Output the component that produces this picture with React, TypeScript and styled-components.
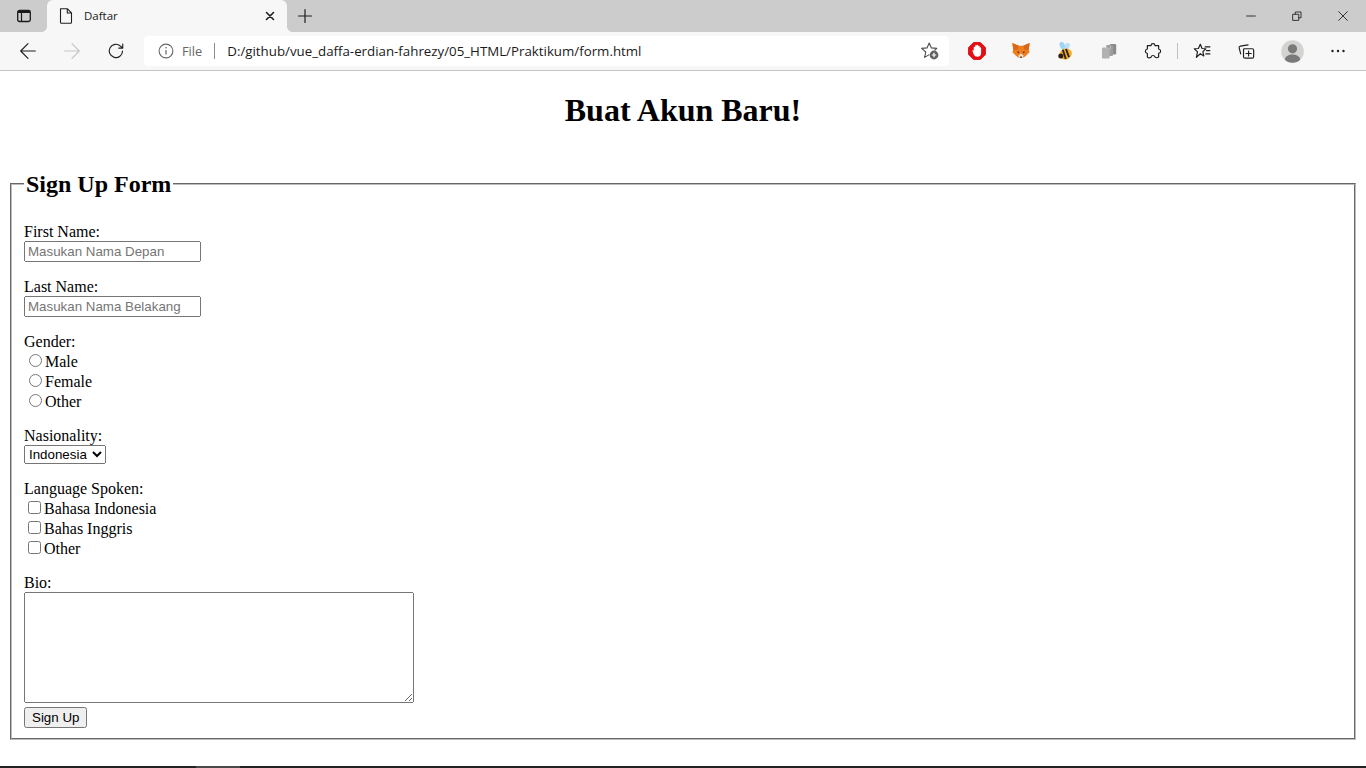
import React from 'react'
import styled, { createGlobalStyle } from 'styled-components';

const GlobalStyle = createGlobalStyle`
    html, body {
        margin: 0;
        padding: 0;
        height: 100%;
        overflow: hidden;
        background: #fff;
    }
`;

const Frame = styled.div`
    display: flex;
    flex-direction: column;
    width: 1366px;
    height: 768px;
    overflow: hidden;
`;

const TabStrip = styled.div`
    display: flex;
    align-items: stretch;
    flex: none;
    height: 32px;
    background: #cccccc;
`;

const SidebarButton = styled.div`
    display: flex;
    align-items: center;
    justify-content: center;
    width: 47px;
`;

const Tab = styled.div`
    position: relative;
    display: flex;
    align-items: center;
    width: 240px;
    background: #f7f7f7;
    border-radius: 6px 6px 0 0;
    padding: 0 9px 0 11px;
    box-sizing: border-box;

    &::before, &::after {
        content: "";
        position: absolute;
        bottom: 0;
        width: 5px;
        height: 5px;
    }
    &::before {
        left: -5px;
        background: radial-gradient(circle at 0 0, transparent 4.5px, #f7f7f7 5px);
    }
    &::after {
        right: -5px;
        background: radial-gradient(circle at 100% 0, transparent 4.5px, #f7f7f7 5px);
    }
`;

const TabTitle = styled.span`
    flex: 1;
    margin-left: 10px;
    padding-bottom: 2px;
    font-family: "Open Sans", "Noto Sans", sans-serif;
    font-size: 11.5px;
    color: #1a1a1a;
`;

const NewTab = styled.div`
    display: flex;
    align-items: center;
    justify-content: center;
    width: 36px;
`;

const Spacer = styled.div`
    flex: 1;
`;

const WindowButton = styled.div`
    display: flex;
    align-items: center;
    justify-content: center;
    width: 46px;
`;

const Toolbar = styled.div`
    display: flex;
    align-items: center;
    flex: none;
    height: 38px;
    padding: 0 6px;
    background: #f7f7f7;
    border-bottom: 1px solid #c4c4c4;
`;

const ToolButton = styled.div<{ $gap?: number }>`
    display: flex;
    align-items: center;
    justify-content: center;
    flex: none;
    width: 44px;
    height: 30px;
    margin-left: ${p => p.$gap || 0}px;
`;

const AddressBar = styled.div`
    display: flex;
    align-items: center;
    width: 805px;
    height: 30px;
    margin: 0 6px;
    padding: 0 9px 0 14px;
    box-sizing: border-box;
    background: #fff;
    border-radius: 4px;
    font-family: "Open Sans", "Noto Sans", sans-serif;
    font-size: 13.3px;
`;

const Scheme = styled.span`
    margin-left: 8px;
    font-size: 12.8px;
    color: #666;
`;

const AddressDivider = styled.span`
    width: 1px;
    height: 16px;
    margin: 0 12px 0 12px;
    background: #8c8c8c;
`;

const Url = styled.span`
    flex: 1;
    color: #1a1a1a;
`;

const ToolDivider = styled.div`
    flex: none;
    width: 1px;
    height: 16px;
    margin: 0 2px;
    background: #c0c0c0;
`;

const Page = styled.main`
    flex: 1;
    min-height: 0;
    padding: 0 8px;
    overflow: hidden;
    background: #fff;
    color: #000;
    font-family: "Liberation Serif", "Times New Roman", serif;
    font-size: 16px;
`;

const Title = styled.h1`
    margin: 21.44px 0 18px;
    font-size: 32px;
    font-weight: bold;
    text-align: center;
`;

const FormBox = styled.fieldset`
    margin: 40px 2px 0;
    padding: 0 12px 10px;
    border: 2px groove #bcbcbc;
`;

const BoxTitle = styled.legend`
    padding: 2px 2px 0;
    font-size: 24px;
    font-weight: bold;
`;

const Field = styled.div`
    margin-top: 16px;
    &:first-of-type {
        margin-top: 25px;
    }
`;

const FieldLabel = styled.label`
    display: block;
`;

const TextInput = styled.input`
    display: block;
    width: 177px;
    box-sizing: border-box;
    font-family: "Liberation Sans", Arial, sans-serif;
`;

const Choice = styled.label`
    display: block;
`;

const BioInput = styled.textarea`
    display: block;
    width: 384px;
    height: 105px;
    font-family: "Liberation Mono", monospace;
`;

const Submit = styled.button`
    display: block;
    margin-top: 4px;
    font-family: "Liberation Sans", Arial, sans-serif;
`;

const NationSelect = styled.select`
    display: block;
    width: 82px;
    font-family: "Liberation Sans", Arial, sans-serif;
`;

const TaskbarEdge = styled.div`
    display: flex;
    flex: none;
    height: 2px;
    background: #222;
`;

const TaskbarGap = styled.div`
    width: 196px;
`;

const TaskbarActive = styled.div`
    width: 44px;
    background: #4a4a4a;
`;

const Line = ({ d, w = 16, color = '#1f1f1f', sw = 1.2 }: { d: string, w?: number, color?: string, sw?: number }) => (
    <svg width={w} height={w} viewBox="0 0 16 16" fill="none" stroke={color} strokeWidth={sw} strokeLinecap="round" strokeLinejoin="round">
        <path d={d} />
    </svg>
);

const Opera = () => (
    <svg width="18" height="18" viewBox="0 0 18 18">
        <path d="M5.6.6 H12.4 L17.4 5.6 V12.4 L12.4 17.4 H5.6 L.6 12.4 V5.6Z" fill="#e40f16" stroke="#e40f16" strokeLinejoin="round" />
        <path d="M4.9 10.2 L4.3 8.6 Q4.9 7.8 5.7 8.5 V5.4 A.75.75 0 0 1 7.2 5.4 V3.8 A.75.75 0 0 1 8.7 3.8 V3.5 A.75.75 0 0 1 10.2 3.5 V4.4 A.75.75 0 0 1 11.7 4.4 V6 A.7.7 0 0 1 13.1 6 V10.8 Q13.1 14.8 9.4 14.8 Q6.6 14.8 5.8 12.6Z" fill="#fff" />
    </svg>
);

const Fox = () => (
    <svg width="18" height="18" viewBox="0 0 18 18">
        <path d="M.4 1 L6.8 3.8 H11.2 L17.6 1 L16.8 7.8 L17.6 10.2 L13.8 14 L10.8 16 H7.2 L4.2 14 L.4 10.2 L1.2 7.8Z" fill="#ee7f1f" />
        <path d="M.4 1 L6.8 3.8 L5.4 8 L1.2 7.8Z M17.6 1 L11.2 3.8 L12.6 8 L16.8 7.8Z" fill="#d9691a" />
        <path d="M6.4 13.6 L9 11.4 L11.6 13.6 L10.8 16 H7.2Z" fill="#f1dcc8" />
        <path d="M4.6 9.6 L7.2 9.8 L6.8 11.4Z M13.4 9.6 L10.8 9.8 L11.2 11.4Z" fill="#4a2e1c" />
        <rect x="8" y="14.6" width="2" height="1.2" fill="#3b2f29" />
    </svg>
);

const Bee = () => (
    <svg width="18" height="20" viewBox="0 0 18 20">
        <ellipse cx="6.4" cy="4.6" rx="2.6" ry="4" fill="#9fd4f5" transform="rotate(-22 6.4 4.6)" />
        <ellipse cx="11.2" cy="5" rx="2.4" ry="3.4" fill="#b9e0f8" transform="rotate(24 11.2 5)" />
        <ellipse cx="9.6" cy="13" rx="6.4" ry="5.4" fill="#f5ad26" transform="rotate(-25 9.6 13)" />
        <path d="M6.8 8.8 L9.8 18 M10 8 L13 16.2" stroke="#2a2018" strokeWidth="1.9" />
        <circle cx="4.8" cy="15" r="2.5" fill="#2a2018" />
    </svg>
);

const Stack = () => (
    <svg width="16" height="16" viewBox="0 0 16 16">
        <rect x="8.6" y="1" width="6.6" height="10.4" rx="1.2" fill="#8b8b8b" />
        <rect x="5" y="2" width="7" height="11" rx="1.2" fill="#9d9d9d" />
        <rect x="1" y="4.4" width="7.6" height="11" rx="1.2" fill="#b2b2b2" />
        <path d="M5.6 6 V3 M9.4 6.4 V2.6" stroke="#c9c9c9" strokeWidth=".8" />
    </svg>
);

const StarAdd = () => (
    <svg width="20" height="20" viewBox="0 0 20 20" fill="none">
        <path d="M9.2 13.6 L4.6 16.4 L5.8 11 L1.6 7.4 L7 6.9 L9.2 2 L11.4 6.9 L16.8 7.4 L14.6 9.4" stroke="#4d4d4d" strokeWidth="1.1" strokeLinejoin="round" />
        <circle cx="14" cy="14" r="4.4" fill="#636363" />
        <path d="M14 11.8 V16.2 M11.8 14 H16.2" stroke="#fff" strokeWidth="1.2" />
    </svg>
);

const Avatar = () => (
    <svg width="23" height="23" viewBox="0 0 24 24">
        <clipPath id="avatar-clip"><circle cx="12" cy="12" r="11.8" /></clipPath>
        <circle cx="12" cy="12" r="11.8" fill="#d3d3d1" />
        <circle cx="12" cy="9.2" r="4.8" fill="#7a7a7a" />
        <ellipse cx="12" cy="20.4" rx="8" ry="5.2" fill="#7a7a7a" clipPath="url(#avatar-clip)" />
    </svg>
);

const App = () => {
    return (
        <Frame>
            <GlobalStyle />
            <TabStrip>
                <SidebarButton>
                    <svg width="16" height="16" viewBox="0 0 16 16" fill="none" stroke="#1a1a1a">
                        <rect x="1.7" y="2.5" width="12.6" height="11" rx="1.8" strokeWidth="1.3" />
                        <path d="M2 5 H14 V3 H2Z" fill="#1a1a1a" stroke="none" />
                        <path d="M5.5 5 V13" strokeWidth="1.2" />
                    </svg>
                </SidebarButton>
                <Tab>
                    <Line d="M2.5 .8 H9.5 L13.5 4.8 V14.2 Q13.5 15.2 12.5 15.2 H3.5 Q2.5 15.2 2.5 14.2 Z M9.3 .8 V5 H13.5" w={16} sw={1.1} />
                    <TabTitle>Daftar</TabTitle>
                    <Line d="M4.5 4.5 L11.5 11.5 M11.5 4.5 L4.5 11.5" sw={1.6} />
                </Tab>
                <NewTab>
                    <Line d="M8 1.5 V14.5 M1.5 8 H14.5" sw={1.2} />
                </NewTab>
                <Spacer />
                <WindowButton><Line d="M3 8 H13" w={14} sw={1} /></WindowButton>
                <WindowButton><Line d="M3.5 6 H10 V13 H3.5Z M6 6 V3.4 H12.6 V10 H10" w={14} sw={1} /></WindowButton>
                <WindowButton><Line d="M3 3 L13 13 M13 3 L3 13" w={14} sw={1} /></WindowButton>
            </TabStrip>
            <Toolbar>
                <ToolButton><Line d="M14.5 8 H1.5 M8 1.5 L1.5 8 L8 14.5" w={18} sw={1} /></ToolButton>
                <ToolButton><Line d="M1.5 8 H14.5 M8 1.5 L14.5 8 L8 14.5" w={18} color="#c6c6c6" sw={1} /></ToolButton>
                <ToolButton><Line d="M13.8 8 A5.9 5.9 0 1 1 11.9 3.6 L14 5.4 M14 1.8 V5.4 H10.4" w={18} sw={1} /></ToolButton>
                <AddressBar>
                    <svg width="16" height="16" viewBox="0 0 16 16" fill="none" stroke="#666">
                        <circle cx="8" cy="8" r="6.9" strokeWidth="1.1" />
                        <path d="M8 7 V11.5" strokeWidth="1.2" />
                        <circle cx="8" cy="4.8" r=".8" fill="#666" stroke="none" />
                    </svg>
                    <Scheme>File</Scheme>
                    <AddressDivider />
                    <Url>D:/github/vue_daffa-erdian-fahrezy/05_HTML/Praktikum/form.html</Url>
                    <StarAdd />
                </AddressBar>
                <ToolButton><Opera /></ToolButton>
                <ToolButton><Fox /></ToolButton>
                <ToolButton><Bee /></ToolButton>
                <ToolButton><Stack /></ToolButton>
                <ToolButton>
                    <Line w={18} sw={1.05} d="M6.2 3.2 Q6.4 1.5 8 1.5 Q9.6 1.5 9.8 3.2 H13 V6.2 Q14.8 6.6 14.8 8.2 Q14.8 9.8 13 10 V13.4 Q11.4 14.6 9.8 13.4 Q9.4 12 8 12 Q6.6 12 6.2 13.6 Q4.4 14.6 3 13.4 V10.2 Q1.2 9.8 1.2 8.2 Q1.2 6.6 3 6.2 V3.2Z" />
                </ToolButton>
                <ToolDivider />
                <ToolButton>
                    <Line w={18} sw={1.05} d="M6.5 2 L8 5.8 L11.4 6 L8.8 8.6 L9.6 12.4 L6.5 10.4 L3 13.6 L4 8.8 L1.2 6 L4.8 5.8Z M10.8 4.4 H15 M12 7.6 H15 M11.4 10.6 H15" />
                </ToolButton>
                <ToolButton>
                    <Line w={18} sw={1.05} d="M9.8 2.5 L3 3.6 Q1.6 3.9 1.9 5.3 L3.3 10.6 M6.5 6 H13.5 Q14.8 6 14.8 7.3 V13 Q14.8 14.4 13.5 14.4 H7.2 Q5.8 14.4 5.8 13 V6.8 Q5.8 6 6.5 6Z M10.3 8 V12.4 M8 10.2 H12.6" />
                </ToolButton>
                <ToolButton $gap={2}><Avatar /></ToolButton>
                <ToolButton $gap={2}>
                    <svg width="16" height="4" viewBox="0 0 16 4" fill="#1f1f1f">
                        <circle cx="2.5" cy="2" r="1.2" /><circle cx="8" cy="2" r="1.2" /><circle cx="13.5" cy="2" r="1.2" />
                    </svg>
                </ToolButton>
            </Toolbar>
            <Page>
                <Title>Buat Akun Baru!</Title>
                <FormBox>
                    <BoxTitle>Sign Up Form</BoxTitle>
                    <Field>
                        <FieldLabel htmlFor="first">First Name:</FieldLabel>
                        <TextInput id="first" type="text" placeholder="Masukan Nama Depan" />
                    </Field>
                    <Field>
                        <FieldLabel htmlFor="last">Last Name:</FieldLabel>
                        <TextInput id="last" type="text" placeholder="Masukan Nama Belakang" />
                    </Field>
                    <Field>
                        <FieldLabel>Gender:</FieldLabel>
                        {['Male', 'Female', 'Other'].map(g => (
                            <Choice key={g}><input type="radio" name="gender" value={g} />{g}</Choice>
                        ))}
                    </Field>
                    <Field>
                        <FieldLabel htmlFor="nation">Nasionality:</FieldLabel>
                        <NationSelect id="nation">
                            <option>Indonesia</option>
                        </NationSelect>
                    </Field>
                    <Field>
                        <FieldLabel>Language Spoken:</FieldLabel>
                        {['Bahasa Indonesia', 'Bahas Inggris', 'Other'].map(l => (
                            <Choice key={l}><input type="checkbox" value={l} />{l}</Choice>
                        ))}
                    </Field>
                    <Field>
                        <FieldLabel htmlFor="bio">Bio:</FieldLabel>
                        <BioInput id="bio" />
                        <Submit type="submit">Sign Up</Submit>
                    </Field>
                </FormBox>
            </Page>
            <TaskbarEdge>
                <TaskbarGap />
                <TaskbarActive />
            </TaskbarEdge>
        </Frame>
    )
}

export default App;
